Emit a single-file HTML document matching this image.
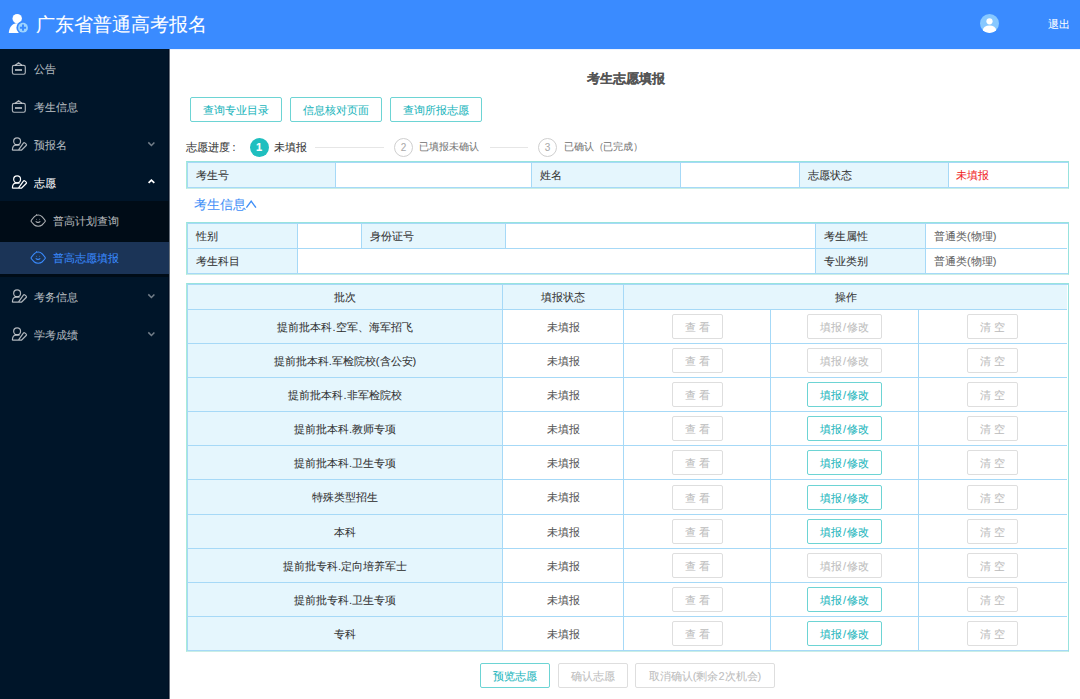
<!DOCTYPE html>
<html><head><meta charset="utf-8"><style>
*{margin:0;padding:0;box-sizing:border-box;}
html,body{width:1080px;height:699px;overflow:hidden;background:#fff;font-family:"Liberation Sans",sans-serif;font-size:11px;color:#333;}
.a{-webkit-text-stroke-width:0.06px;}
.a{position:absolute;white-space:nowrap;}
.hdr{left:0;top:0;width:1080px;height:49px;background:#3a8bff;}
.side{left:0;top:49px;width:169px;height:650px;background:#001529;}
.mt{font-size:11px;line-height:16px;color:rgba(255,255,255,0.68);}
.btn{height:25px;border:1px solid #6dd4d4;border-radius:2px;color:#1cb6bd;font-size:11px;line-height:23px;padding-top:1px;text-align:center;background:#fff;}
.dis{border-color:#dedede;color:#bdbdbd;}
.tb{border:1px solid #97e3de;}
.tin{border:1px solid #a6d9f7;border-right:none;}
.tb{border-bottom-color:#c9eee6;border-left-color:#a9ebd8;}
.vl{width:1px;background:#a6d9f7;}
.hl{height:1px;background:#a6d9f7;}
.bg{background:#e5f6fd;}
.tx{font-size:11px;line-height:16px;color:#333;}
.c{text-align:center;}
</style></head><body>
<div class="a hdr" style=""></div>
<svg class="a" style="left:6px;top:10px" width="26" height="28" viewBox="0 0 26 28">
    <circle cx="11.2" cy="8.6" r="4.7" fill="#fff"/>
    <path d="M2.8 23.1 C3 17.8 5.8 14 10 13.3 L14 13.3 L14 23.1 Z" fill="#fff"/>
    <circle cx="17" cy="17.7" r="6.6" fill="#3a8bff"/>
    <circle cx="17" cy="17.7" r="4.9" fill="#9dd4ff"/>
    <path d="M13.9 17.7 H20.1 M17 14.6 V20.8" stroke="#3a8bff" stroke-width="2"/>
  </svg>
<div class="a " style="left:36px;top:12px;font-size:19px;line-height:26px;color:#fff;">广东省普通高考报名</div>
<svg class="a" style="left:980px;top:14px" width="19" height="19" viewBox="0 0 19 19">
    <defs><clipPath id="cc"><circle cx="9.5" cy="9.5" r="9.5"/></clipPath></defs>
    <circle cx="9.5" cy="9.5" r="9.5" fill="#87c8ff"/>
    <g clip-path="url(#cc)">
      <circle cx="9.5" cy="7.3" r="3.1" fill="#fff"/>
      <ellipse cx="9.5" cy="16" rx="6.6" ry="4.6" fill="#fff"/>
    </g>
  </svg>
<div class="a " style="left:1048px;top:16px;font-size:11px;line-height:16px;color:#fff;">退出</div>
<div class="a " style="left:170px;top:49px;width:910px;height:1px;background:#edf3ff;"></div>
<div class="a side" style=""></div>
<div class="a " style="left:168px;top:49px;width:1px;height:650px;background:#000e22;"></div>
<div class="a " style="left:169px;top:49px;width:1px;height:650px;background:#69727d;"></div>
<div class="a " style="left:0;top:201px;width:169px;height:76px;background:#000c17;"></div>
<div class="a " style="left:0;top:242px;width:169px;height:32px;background:#1b3457;"></div>
<svg class="a" style="left:8px;top:58.0px" width="24" height="20" viewBox="0 0 24 20" fill="none" stroke="rgba(255,255,255,0.68)" stroke-width="1.15">
<rect x="4.4" y="7.4" width="12.9" height="8.8" rx="1.6"/><path d="M7.3 7.3 L10.6 4.7 L13.9 7.3" stroke-linejoin="round"/><rect x="7" y="11.1" width="7" height="1.8" fill="rgba(255,255,255,0.68)" stroke="none"/></svg>
<div class="a mt" style="left:34px;top:61.0px;color:rgba(255,255,255,0.68);">公告</div>
<svg class="a" style="left:8px;top:96.0px" width="24" height="20" viewBox="0 0 24 20" fill="none" stroke="rgba(255,255,255,0.68)" stroke-width="1.15">
<rect x="4.4" y="7.4" width="12.9" height="8.8" rx="1.6"/><path d="M7.3 7.3 L10.6 4.7 L13.9 7.3" stroke-linejoin="round"/><rect x="7" y="11.1" width="7" height="1.8" fill="rgba(255,255,255,0.68)" stroke="none"/></svg>
<div class="a mt" style="left:34px;top:99.0px;color:rgba(255,255,255,0.68);">考生信息</div>
<svg class="a" style="left:8px;top:133.7px" width="24" height="20" viewBox="0 0 24 20" fill="none" stroke="rgba(255,255,255,0.68)" stroke-width="1.2" stroke-linejoin="round">
<circle cx="9.1" cy="7.3" r="3.45"/><path d="M4.4 16.2 C4.4 13.4 5.6 11.2 8 11.2 L11.6 11.2"/><path d="M10.6 15.8 L15.4 9.1 Q16 8.3 16.8 8.9 L18.2 10.1 Q18.9 10.8 18.2 11.5 L13.4 16.2 L4.4 16.2"/></svg>
<div class="a mt" style="left:34px;top:137.0px;color:rgba(255,255,255,0.68);">预报名</div>
<svg class="a" style="left:140px;top:135.0px" width="24" height="20" viewBox="0 0 24 20" fill="none" stroke="rgba(255,255,255,0.45)" stroke-width="1.5"><path d="M8.3 7.4 L11.4 10.5 L14.4 7.4"/></svg>
<svg class="a" style="left:8px;top:172.0px" width="24" height="20" viewBox="0 0 24 20" fill="none" stroke="#fff" stroke-width="1.2" stroke-linejoin="round">
<circle cx="9.1" cy="7.3" r="3.45"/><path d="M4.4 16.2 C4.4 13.4 5.6 11.2 8 11.2 L11.6 11.2"/><path d="M10.6 15.8 L15.4 9.1 Q16 8.3 16.8 8.9 L18.2 10.1 Q18.9 10.8 18.2 11.5 L13.4 16.2 L4.4 16.2"/></svg>
<div class="a mt" style="left:34px;top:175.3px;color:#fff;">志愿</div>
<svg class="a" style="left:140px;top:172.0px" width="24" height="20" viewBox="0 0 24 20" fill="none" stroke="#fff" stroke-width="1.7"><path d="M8.6 10.9 L11.4 8.1 L14.3 10.9"/></svg>
<svg class="a" style="left:8px;top:286.0px" width="24" height="20" viewBox="0 0 24 20" fill="none" stroke="rgba(255,255,255,0.68)" stroke-width="1.2" stroke-linejoin="round">
<circle cx="9.1" cy="7.3" r="3.45"/><path d="M4.4 16.2 C4.4 13.4 5.6 11.2 8 11.2 L11.6 11.2"/><path d="M10.6 15.8 L15.4 9.1 Q16 8.3 16.8 8.9 L18.2 10.1 Q18.9 10.8 18.2 11.5 L13.4 16.2 L4.4 16.2"/></svg>
<div class="a mt" style="left:34px;top:289.3px;color:rgba(255,255,255,0.68);">考务信息</div>
<svg class="a" style="left:140px;top:287.3px" width="24" height="20" viewBox="0 0 24 20" fill="none" stroke="rgba(255,255,255,0.45)" stroke-width="1.5"><path d="M8.3 7.4 L11.4 10.5 L14.4 7.4"/></svg>
<svg class="a" style="left:8px;top:323.8px" width="24" height="20" viewBox="0 0 24 20" fill="none" stroke="rgba(255,255,255,0.68)" stroke-width="1.2" stroke-linejoin="round">
<circle cx="9.1" cy="7.3" r="3.45"/><path d="M4.4 16.2 C4.4 13.4 5.6 11.2 8 11.2 L11.6 11.2"/><path d="M10.6 15.8 L15.4 9.1 Q16 8.3 16.8 8.9 L18.2 10.1 Q18.9 10.8 18.2 11.5 L13.4 16.2 L4.4 16.2"/></svg>
<div class="a mt" style="left:34px;top:327.1px;color:rgba(255,255,255,0.68);">学考成绩</div>
<svg class="a" style="left:140px;top:325.1px" width="24" height="20" viewBox="0 0 24 20" fill="none" stroke="rgba(255,255,255,0.45)" stroke-width="1.5"><path d="M8.3 7.4 L11.4 10.5 L14.4 7.4"/></svg>
<svg class="a" style="left:26px;top:210.0px" width="24" height="20" viewBox="0 0 24 20" fill="none" stroke="rgba(255,255,255,0.68)" stroke-width="1.1" stroke-linejoin="round">
<path d="M5.1 10.9 Q5.1 10.2 8.4 6.6 Q10 5 12.2 5 Q14.4 5 16 6.6 Q19.3 10.2 19.3 10.9 Q19.3 11.6 16 15 Q14.6 16.3 12.2 16.3 Q9.8 16.3 8.4 15 Q5.1 11.6 5.1 10.9 Z"/>
<path d="M10.3 4.3 Q10.8 4.9 10.6 5.3"/>
<circle cx="10.6" cy="9.3" r="0.45" fill="rgba(255,255,255,0.68)" stroke="none"/><circle cx="13.7" cy="9.3" r="0.45" fill="rgba(255,255,255,0.68)" stroke="none"/><path d="M9.7 11.3 Q12 13.4 14.3 11.3"/></svg>
<div class="a mt" style="left:53px;top:213.0px;color:rgba(255,255,255,0.68);">普高计划查询</div>
<svg class="a" style="left:26px;top:247.4px" width="24" height="20" viewBox="0 0 24 20" fill="none" stroke="#3a8bff" stroke-width="1.1" stroke-linejoin="round">
<path d="M5.1 10.9 Q5.1 10.2 8.4 6.6 Q10 5 12.2 5 Q14.4 5 16 6.6 Q19.3 10.2 19.3 10.9 Q19.3 11.6 16 15 Q14.6 16.3 12.2 16.3 Q9.8 16.3 8.4 15 Q5.1 11.6 5.1 10.9 Z"/>
<path d="M10.3 4.3 Q10.8 4.9 10.6 5.3"/>
<circle cx="10.6" cy="9.3" r="0.45" fill="#3a8bff" stroke="none"/><circle cx="13.7" cy="9.3" r="0.45" fill="#3a8bff" stroke="none"/><path d="M9.7 11.3 Q12 13.4 14.3 11.3"/></svg>
<div class="a mt" style="left:53px;top:250.4px;color:#3a8bff;">普高志愿填报</div>
<div class="a " style="left:587px;top:71px;font-size:13.3px;line-height:16px;font-weight:bold;color:#555;">考生志愿填报</div>
<div class="a btn" style="left:190px;top:97px;width:92px;">查询专业目录</div>
<div class="a btn" style="left:290px;top:97px;width:92px;">信息核对页面</div>
<div class="a btn" style="left:390px;top:97px;width:92px;">查询所报志愿</div>
<div class="a tx" style="left:186px;top:139px;color:#333;font-size:10.5px;">志愿进度<span style="margin-left:2.5px">:</span></div>
<div class="a " style="left:249.5px;top:138px;width:19px;height:19px;border-radius:50%;background:#1fbfbf;color:#fff;font-size:11px;line-height:19px;text-align:center;font-weight:bold;">1</div>
<div class="a tx" style="left:274px;top:139px;color:#333;font-size:10.6px;">未填报</div>
<div class="a " style="left:315px;top:147px;width:69px;height:1px;background:#e6e6e6;"></div>
<div class="a " style="left:394px;top:138px;width:19px;height:19px;border-radius:50%;border:1px solid #cfcfcf;color:#aaa;font-size:10px;line-height:17px;text-align:center;">2</div>
<div class="a tx" style="left:419px;top:139px;color:#777;font-size:10.3px;">已填报未确认</div>
<div class="a " style="left:490px;top:147px;width:38px;height:1px;background:#e6e6e6;"></div>
<div class="a " style="left:538px;top:138px;width:19px;height:19px;border-radius:50%;border:1px solid #cfcfcf;color:#aaa;font-size:10px;line-height:17px;text-align:center;">3</div>
<div class="a tx" style="left:564px;top:139px;color:#777;font-size:10.3px;">已确认<span style="letter-spacing:-1.5px">（</span>已完成）</div>
<div class="a tb" style="left:186px;top:161px;width:883px;height:28px;"></div>
<div class="a tin" style="left:187px;top:162px;width:881px;height:26px;"></div>
<div class="a bg" style="left:188px;top:163px;width:147px;height:24px;"></div>
<div class="a bg" style="left:532px;top:163px;width:148px;height:24px;"></div>
<div class="a bg" style="left:800px;top:163px;width:148px;height:24px;"></div>
<div class="a vl" style="left:335px;top:163px;height:24px;"></div>
<div class="a vl" style="left:531px;top:163px;height:24px;"></div>
<div class="a vl" style="left:680px;top:163px;height:24px;"></div>
<div class="a vl" style="left:799px;top:163px;height:24px;"></div>
<div class="a vl" style="left:948px;top:163px;height:24px;"></div>
<div class="a tx" style="left:196px;top:167px;color:#333;">考生号</div>
<div class="a tx" style="left:540px;top:167px;color:#333;">姓名</div>
<div class="a tx" style="left:808px;top:167px;color:#333;">志愿状态</div>
<div class="a tx" style="left:956px;top:167px;color:#f01e1e;">未填报</div>
<div class="a " style="left:194px;top:196px;font-size:13px;line-height:17px;color:#3e8ef7;">考生信息</div>
<svg class="a" style="left:244px;top:197px" width="14" height="14" viewBox="0 0 14 14" fill="none" stroke="#3e8ef7" stroke-width="1.4"><path d="M2.4 10.7 L7.2 4.1 L11.9 10.7"/></svg>
<div class="a tb" style="left:186px;top:222px;width:883px;height:53px;"></div>
<div class="a tin" style="left:187px;top:223px;width:881px;height:51px;"></div>
<div class="a bg" style="left:188px;top:224px;width:109px;height:24px;"></div>
<div class="a bg" style="left:362px;top:224px;width:143px;height:24px;"></div>
<div class="a bg" style="left:816px;top:224px;width:109px;height:24px;"></div>
<div class="a bg" style="left:188px;top:249px;width:109px;height:24px;"></div>
<div class="a bg" style="left:816px;top:249px;width:109px;height:24px;"></div>
<div class="a hl" style="left:188px;top:248px;width:879px;"></div>
<div class="a vl" style="left:297px;top:224px;height:24px;"></div>
<div class="a vl" style="left:361px;top:224px;height:24px;"></div>
<div class="a vl" style="left:505px;top:224px;height:24px;"></div>
<div class="a vl" style="left:815px;top:224px;height:24px;"></div>
<div class="a vl" style="left:925px;top:224px;height:24px;"></div>
<div class="a vl" style="left:297px;top:249px;height:24px;"></div>
<div class="a vl" style="left:815px;top:249px;height:24px;"></div>
<div class="a vl" style="left:925px;top:249px;height:24px;"></div>
<div class="a tx" style="left:196px;top:228px;color:#333;">性别</div>
<div class="a tx" style="left:370px;top:228px;color:#333;">身份证号</div>
<div class="a tx" style="left:824px;top:228px;color:#333;">考生属性</div>
<div class="a tx" style="left:934px;top:228px;color:#666;">普通类(物理)</div>
<div class="a tx" style="left:196px;top:253px;color:#333;">考生科目</div>
<div class="a tx" style="left:824px;top:253px;color:#333;">专业类别</div>
<div class="a tx" style="left:934px;top:253px;color:#666;">普通类(物理)</div>
<div class="a tb" style="left:186px;top:283px;width:883px;height:369px;"></div>
<div class="a tin" style="left:187px;top:284px;width:881px;height:367px;"></div>
<div class="a bg" style="left:188px;top:285px;width:879px;height:24px;"></div>
<div class="a bg" style="left:188px;top:310px;width:314px;height:340px;"></div>
<div class="a hl" style="left:188px;top:309px;width:879px;"></div>
<div class="a hl" style="left:188px;top:343px;width:879px;"></div>
<div class="a hl" style="left:188px;top:377px;width:879px;"></div>
<div class="a hl" style="left:188px;top:411px;width:879px;"></div>
<div class="a hl" style="left:188px;top:445px;width:879px;"></div>
<div class="a hl" style="left:188px;top:479px;width:879px;"></div>
<div class="a hl" style="left:188px;top:514px;width:879px;"></div>
<div class="a hl" style="left:188px;top:548px;width:879px;"></div>
<div class="a hl" style="left:188px;top:582px;width:879px;"></div>
<div class="a hl" style="left:188px;top:616px;width:879px;"></div>
<div class="a vl" style="left:502px;top:285px;height:24px;"></div>
<div class="a vl" style="left:623px;top:285px;height:24px;"></div>
<div class="a vl" style="left:502px;top:310px;height:340px;"></div>
<div class="a vl" style="left:623px;top:310px;height:340px;"></div>
<div class="a vl" style="left:770px;top:310px;height:340px;"></div>
<div class="a vl" style="left:918px;top:310px;height:340px;"></div>
<div class="a tx c" style="left:188px;top:289px;width:314px;">批次</div>
<div class="a tx c" style="left:503px;top:289px;width:120px;">填报状态</div>
<div class="a tx c" style="left:624px;top:289px;width:443px;">操作</div>
<div class="a tx c" style="left:188px;top:318.5px;width:314px;">提前批本科.空军、海军招飞</div>
<div class="a tx c" style="left:503px;top:318.5px;width:120px;color:#555;">未填报</div>
<div class="a btn dis" style="left:672px;top:314.0px;width:51px;">查 看</div>
<div class="a btn dis" style="left:807px;top:314.0px;width:75px;">填报<span style="margin:0 1px">/</span>修改</div>
<div class="a btn dis" style="left:967px;top:314.0px;width:51px;">清 空</div>
<div class="a tx c" style="left:188px;top:352.5px;width:314px;">提前批本科.军检院校(含公安)</div>
<div class="a tx c" style="left:503px;top:352.5px;width:120px;color:#555;">未填报</div>
<div class="a btn dis" style="left:672px;top:348.0px;width:51px;">查 看</div>
<div class="a btn dis" style="left:807px;top:348.0px;width:75px;">填报<span style="margin:0 1px">/</span>修改</div>
<div class="a btn dis" style="left:967px;top:348.0px;width:51px;">清 空</div>
<div class="a tx c" style="left:188px;top:386.5px;width:314px;">提前批本科.非军检院校</div>
<div class="a tx c" style="left:503px;top:386.5px;width:120px;color:#555;">未填报</div>
<div class="a btn dis" style="left:672px;top:382.0px;width:51px;">查 看</div>
<div class="a btn" style="left:807px;top:382.0px;width:75px;">填报<span style="margin:0 1px">/</span>修改</div>
<div class="a btn dis" style="left:967px;top:382.0px;width:51px;">清 空</div>
<div class="a tx c" style="left:188px;top:420.5px;width:314px;">提前批本科.教师专项</div>
<div class="a tx c" style="left:503px;top:420.5px;width:120px;color:#555;">未填报</div>
<div class="a btn dis" style="left:672px;top:416.0px;width:51px;">查 看</div>
<div class="a btn" style="left:807px;top:416.0px;width:75px;">填报<span style="margin:0 1px">/</span>修改</div>
<div class="a btn dis" style="left:967px;top:416.0px;width:51px;">清 空</div>
<div class="a tx c" style="left:188px;top:454.5px;width:314px;">提前批本科.卫生专项</div>
<div class="a tx c" style="left:503px;top:454.5px;width:120px;color:#555;">未填报</div>
<div class="a btn dis" style="left:672px;top:450.0px;width:51px;">查 看</div>
<div class="a btn" style="left:807px;top:450.0px;width:75px;">填报<span style="margin:0 1px">/</span>修改</div>
<div class="a btn dis" style="left:967px;top:450.0px;width:51px;">清 空</div>
<div class="a tx c" style="left:188px;top:489.0px;width:314px;">特殊类型招生</div>
<div class="a tx c" style="left:503px;top:489.0px;width:120px;color:#555;">未填报</div>
<div class="a btn dis" style="left:672px;top:484.5px;width:51px;">查 看</div>
<div class="a btn" style="left:807px;top:484.5px;width:75px;">填报<span style="margin:0 1px">/</span>修改</div>
<div class="a btn dis" style="left:967px;top:484.5px;width:51px;">清 空</div>
<div class="a tx c" style="left:188px;top:523.5px;width:314px;">本科</div>
<div class="a tx c" style="left:503px;top:523.5px;width:120px;color:#555;">未填报</div>
<div class="a btn dis" style="left:672px;top:519.0px;width:51px;">查 看</div>
<div class="a btn" style="left:807px;top:519.0px;width:75px;">填报<span style="margin:0 1px">/</span>修改</div>
<div class="a btn dis" style="left:967px;top:519.0px;width:51px;">清 空</div>
<div class="a tx c" style="left:188px;top:557.5px;width:314px;">提前批专科.定向培养军士</div>
<div class="a tx c" style="left:503px;top:557.5px;width:120px;color:#555;">未填报</div>
<div class="a btn dis" style="left:672px;top:553.0px;width:51px;">查 看</div>
<div class="a btn dis" style="left:807px;top:553.0px;width:75px;">填报<span style="margin:0 1px">/</span>修改</div>
<div class="a btn dis" style="left:967px;top:553.0px;width:51px;">清 空</div>
<div class="a tx c" style="left:188px;top:591.5px;width:314px;">提前批专科.卫生专项</div>
<div class="a tx c" style="left:503px;top:591.5px;width:120px;color:#555;">未填报</div>
<div class="a btn dis" style="left:672px;top:587.0px;width:51px;">查 看</div>
<div class="a btn" style="left:807px;top:587.0px;width:75px;">填报<span style="margin:0 1px">/</span>修改</div>
<div class="a btn dis" style="left:967px;top:587.0px;width:51px;">清 空</div>
<div class="a tx c" style="left:188px;top:625.5px;width:314px;">专科</div>
<div class="a tx c" style="left:503px;top:625.5px;width:120px;color:#555;">未填报</div>
<div class="a btn dis" style="left:672px;top:621.0px;width:51px;">查 看</div>
<div class="a btn" style="left:807px;top:621.0px;width:75px;">填报<span style="margin:0 1px">/</span>修改</div>
<div class="a btn dis" style="left:967px;top:621.0px;width:51px;">清 空</div>
<div class="a btn" style="left:480px;top:663px;width:70px;">预览志愿</div>
<div class="a btn dis" style="left:558px;top:663px;width:70px;">确认志愿</div>
<div class="a btn dis" style="left:635px;top:663px;width:140px;">取消确认(剩余2次机会)</div>
</body></html>
